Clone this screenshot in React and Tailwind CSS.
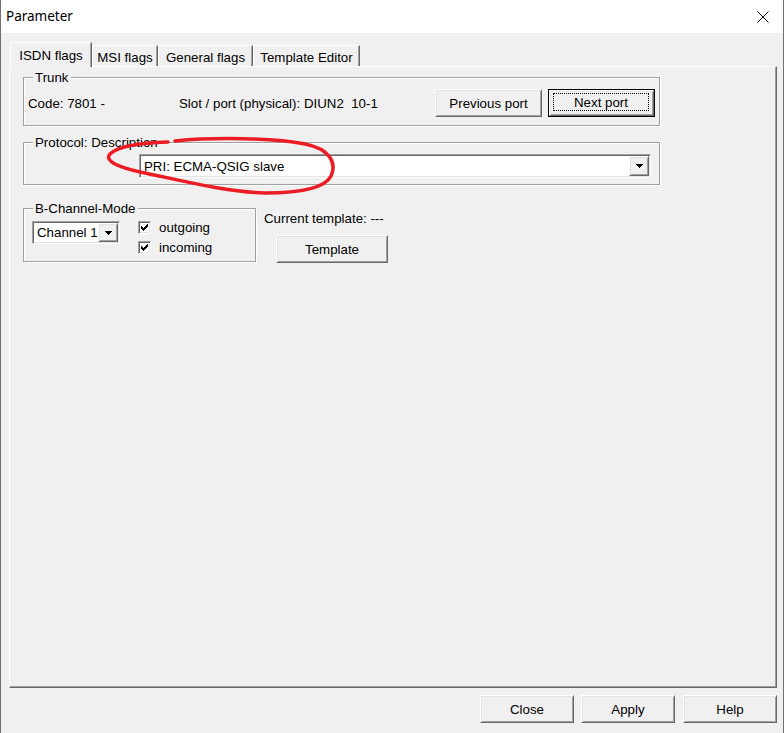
import React from 'react';

// classic win32 3D edges
const raised =
  'border border-t-white border-l-white border-r-[#696969] border-b-[#696969] shadow-[inset_1px_1px_0_#e3e3e3,inset_-1px_-1px_0_#a0a0a0]';
const sunken =
  'border border-t-[#a0a0a0] border-l-[#a0a0a0] border-r-white border-b-white shadow-[inset_1px_1px_0_#696969,inset_-1px_-1px_0_#e3e3e3]';
const etched = 'border border-[#a0a0a0] shadow-[inset_1px_1px_0_#fff,1px_1px_0_#fff]';

function Button({ children, className = '', isDefault = false }) {
  if (isDefault) {
    return (
      <button className={`box-border border border-black bg-[#f0f0f0] p-0 ${className}`}>
        <div className={`box-border h-full w-full pl-[3px] pr-[4px] pt-[2px] pb-[4px] ${raised}`}>
          <div className="flex h-full w-full items-center justify-center border border-dotted border-black">
            {children}
          </div>
        </div>
      </button>
    );
  }
  return (
    <button className={`box-border flex items-center justify-center bg-[#f0f0f0] p-0 ${raised} ${className}`}>
      {children}
    </button>
  );
}

function Arrow() {
  return (
    <svg width="7" height="4" viewBox="0 0 7 4" shapeRendering="crispEdges">
      <rect x="0" y="0" width="7" height="1" fill="#000" />
      <rect x="1" y="1" width="5" height="1" fill="#000" />
      <rect x="2" y="2" width="3" height="1" fill="#000" />
      <rect x="3" y="3" width="1" height="1" fill="#000" />
    </svg>
  );
}

function Combo({ text, className = '' }) {
  return (
    <div className={`box-border flex bg-white p-px ${sunken} ${className}`}>
      <span className="flex flex-1 items-center pl-[3px]">{text}</span>
      <div className={`box-border flex w-[20px] items-center justify-center bg-[#f0f0f0] ${raised}`}>
        <Arrow />
      </div>
    </div>
  );
}

function CheckBox({ label }) {
  return (
    <div className="flex h-[13px] items-center gap-[8px]">
      <div className={`box-border flex h-[13px] w-[13px] items-center justify-center bg-white ${sunken}`}>
        <svg width="7" height="7" viewBox="0 0 7 7" shapeRendering="crispEdges">
          <rect x="6" y="0" width="1" height="1" fill="#000" />
          <rect x="5" y="1" width="2" height="1" fill="#000" />
          <rect x="0" y="2" width="1" height="1" fill="#000" />
          <rect x="4" y="2" width="3" height="1" fill="#000" />
          <rect x="0" y="3" width="2" height="1" fill="#000" />
          <rect x="3" y="3" width="3" height="1" fill="#000" />
          <rect x="0" y="4" width="5" height="1" fill="#000" />
          <rect x="1" y="5" width="3" height="1" fill="#000" />
          <rect x="2" y="6" width="1" height="1" fill="#000" />
        </svg>
      </div>
      <span>{label}</span>
    </div>
  );
}

function GroupLabel({ children }) {
  return <span className="absolute -top-[8px] left-[9px] bg-[#f0f0f0] px-[2px]">{children}</span>;
}

const tabs = [
  { label: 'ISDN flags', w: 'w-[82px]', active: true },
  { label: 'MSI flags', w: 'w-[66px]' },
  { label: 'General flags', w: 'w-[95px]' },
  { label: 'Template Editor', w: 'w-[107px]' },
];

export default function App() {
  return (
    <div className="relative flex h-[733px] w-[784px] flex-col overflow-hidden border-x border-[#707070] bg-[#f0f0f0] font-['Liberation_Sans',Arial,sans-serif] text-[13.3px] leading-[15px] text-black">
      {/* Title bar */}
      <div className="flex h-[33px] shrink-0 items-center justify-between bg-white pl-[5px] pr-[14px]">
        <span className="font-['Noto_Sans',sans-serif] text-[13.5px]">Parameter</span>
        <svg width="12" height="12" viewBox="0 0 12 12">
          <path d="M0.5 0.5L11.5 11.5M11.5 0.5L0.5 11.5" stroke="#000" strokeWidth="1" />
        </svg>
      </div>

      {/* Tabs */}
      <div className="mt-[9px] flex h-[24px] shrink-0 items-end pl-[9px]">
        {tabs.map((t) =>
          t.active ? (
            <div
              key={t.label}
              className={`relative z-10 -mb-px box-border h-[25px] ${t.w} border-x border-t border-l-white border-t-white border-r-[#696969] bg-[#f0f0f0] pt-[5px] text-center shadow-[inset_-1px_0_0_#a0a0a0]`}
            >
              {t.label}
            </div>
          ) : (
            <div
              key={t.label}
              className={`box-border h-[21px] ${t.w} border-x border-t border-l-white border-t-white border-r-[#696969] pt-[4px] text-center shadow-[inset_-1px_0_0_#a0a0a0]`}
            >
              {t.label}
            </div>
          )
        )}
      </div>

      {/* Tab page */}
      <div className="ml-[8px] box-border h-[622px] w-[768px] shrink-0 border border-t-white border-l-white border-r-[#696969] border-b-[#696969] pl-[13px] pt-[10px] shadow-[inset_-1px_-1px_0_#a0a0a0]">
        {/* Trunk */}
        <div className={`relative box-border h-[49px] w-[637px] ${etched}`}>
          <GroupLabel>Trunk</GroupLabel>
          <div className="flex h-[28px] items-center pl-[4px] pr-[4px] mt-[11px]">
            <span className="w-[151px]">Code: 7801 -</span>
            <span className="whitespace-pre">Slot / port (physical): DIUN2  10-1</span>
            <div className="flex-1" />
            <Button className="h-[28px] w-[107px]">Previous port</Button>
            <Button isDefault className="ml-[6px] h-[28px] w-[107px]">Next port</Button>
          </div>
        </div>

        {/* Protocol */}
        <div className={`relative mt-[16px] box-border h-[43px] w-[637px] pl-[115px] pt-[11px] ${etched}`}>
          <GroupLabel>Protocol: Description</GroupLabel>
          <Combo text="PRI: ECMA-QSIG slave" className="h-[24px] w-[512px]" />
        </div>

        {/* B-Channel + template */}
        <div className="mt-[23px] flex items-start">
          <div className={`relative box-border h-[54px] w-[233px] pl-[8px] pt-[12px] ${etched}`}>
            <GroupLabel>B-Channel-Mode</GroupLabel>
            <div className="flex gap-[18px]">
              <Combo text="Channel 1" className="h-[23px] w-[88px]" />
              <div className="flex flex-col gap-[7px]">
                <CheckBox label="outgoing" />
                <CheckBox label="incoming" />
              </div>
            </div>
          </div>
          <div className="ml-[8px] flex flex-col pt-[3px]">
            <span>Current template: ---</span>
            <Button className="ml-[12px] mt-[9px] h-[28px] w-[112px]">Template</Button>
          </div>
        </div>
      </div>

      {/* Dialog buttons */}
      <div className="mt-[7px] flex justify-end pr-[6px]">
        <Button className="h-[28px] w-[94px]">Close</Button>
        <Button className="ml-[7px] h-[28px] w-[94px]">Apply</Button>
        <Button className="ml-[8px] h-[28px] w-[94px]">Help</Button>
      </div>

      {/* red hand-drawn annotation */}
      <svg
        className="pointer-events-none absolute -left-px top-0"
        width="784"
        height="733"
        viewBox="0 0 784 733"
      >
        <path
          d="M175 141 C215 137 275 138 305 144 C330 149 337 163 331 176 C325 188 300 193 265 193 C225 192 180 180 140 172 C118 167 104 161 110 154 C117 147 135 143 168 142"
          fill="none"
          stroke="#ed1c24"
          strokeWidth="3.5"
          strokeLinecap="round"
        />
      </svg>
    </div>
  );
}
